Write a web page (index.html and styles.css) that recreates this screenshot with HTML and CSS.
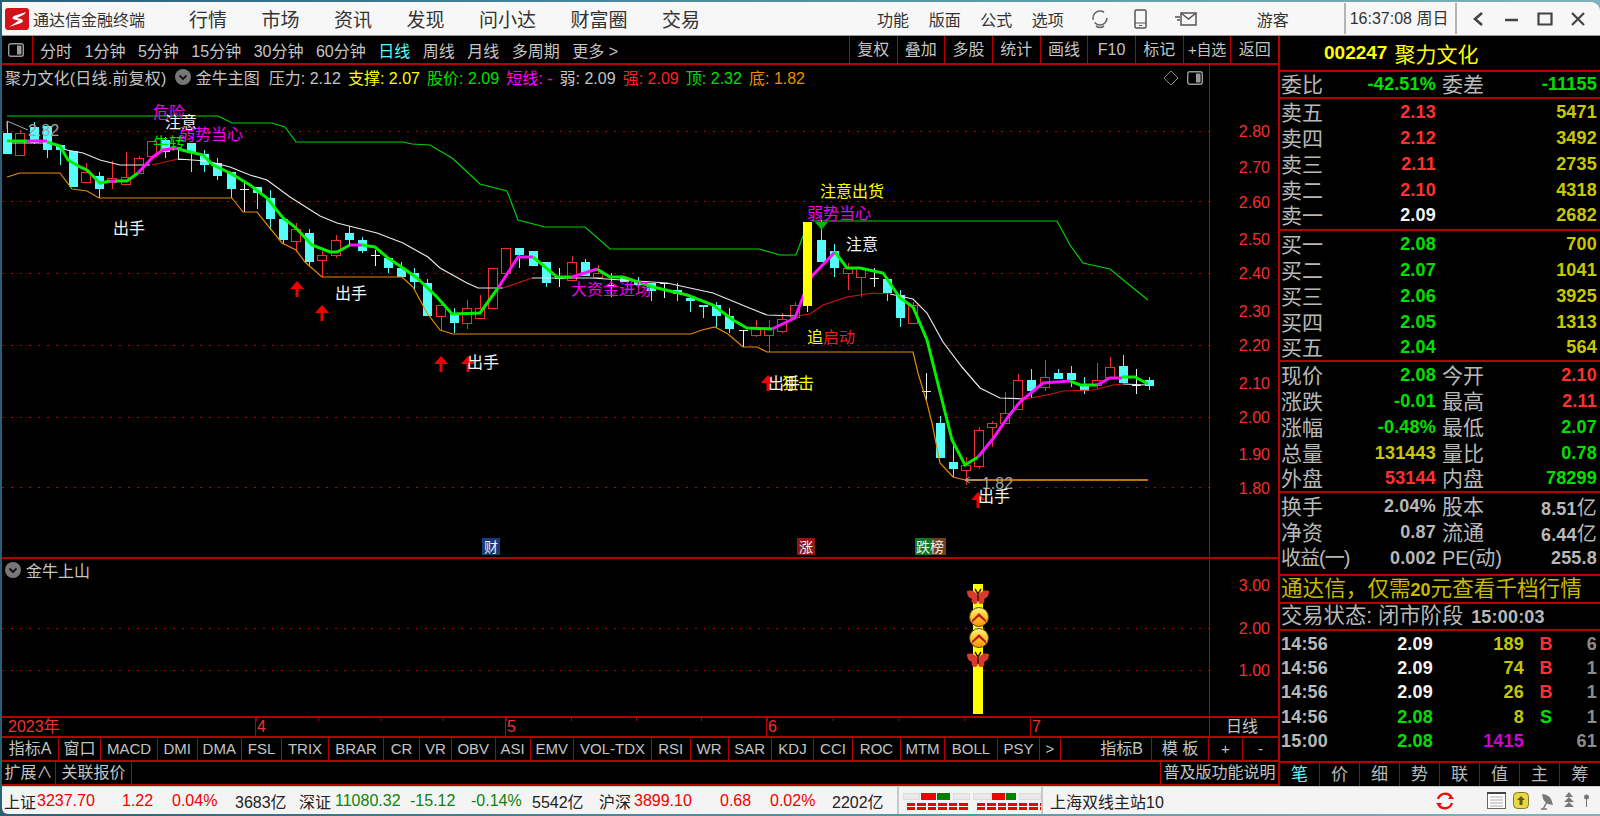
FILE: index.html
```html
<!DOCTYPE html>
<html lang="zh-CN">
<head>
<meta charset="utf-8">
<title>通达信金融终端</title>
<link rel="stylesheet" href="styles.css">
</head>
<body>
<div class="win">
  <header class="titlebar">
    <svg class="logo" viewBox="0 0 24 22"><rect width="24" height="22" rx="3" fill="#d0141c"/><path d="M21 4 9 8Q6 10 9 11.500L14 12.500 4 19 16 15Q20 13 16 11L12 10 19 6.500Z" fill="#fff"/></svg>
    <span class="app">通达信金融终端</span>
    <nav class="menu"><span>行情</span><span>市场</span><span>资讯</span><span>发现</span><span>问小达</span><span>财富圈</span><span>交易</span></nav>
    <nav class="menu2"><span>功能</span><span>版面</span><span>公式</span><span>选项</span></nav>
    <svg class="ti ti-head" viewBox="0 0 20 20"><circle cx="10" cy="9" r="7" fill="none" stroke="#666" stroke-width="1.600" stroke-dasharray="17 3 17 7"/><path d="M6 17q4 3 8 0" fill="none" stroke="#666" stroke-width="1.600"/></svg>
    <svg class="ti ti-phone" viewBox="0 0 13 20"><rect x="1" y="1" width="11" height="18" rx="1.500" fill="none" stroke="#555" stroke-width="1.500"/><path d="M1 14h11" stroke="#555"/><path d="M5 16.500h3" stroke="#555"/></svg>
    <svg class="ti ti-mail" viewBox="0 0 22 15"><path d="M6 2h15v12H6z" fill="none" stroke="#555" stroke-width="1.500"/><path d="M6 2l7.500 6L21 2" fill="none" stroke="#555" stroke-width="1.500"/><path d="M0 6h5M2 9h3" stroke="#555" stroke-width="1.500"/></svg>
    <span class="guest">游客</span>
    <span class="clock">16:37:08 周日</span>
    <div class="ctrls">
      <svg viewBox="0 0 16 16"><path d="M11 2 4 8l7 6" fill="none" stroke="#444" stroke-width="2.600"/></svg>
      <svg viewBox="0 0 16 16"><path d="M1 9h13" stroke="#444" stroke-width="2.500"/></svg>
      <svg viewBox="0 0 16 16"><path d="M1.500 2.500h13v11h-13z" fill="none" stroke="#444" stroke-width="2.200"/></svg>
      <svg viewBox="0 0 16 16"><path d="M2 2l12 12M14 2 2 14" stroke="#444" stroke-width="2.200"/></svg>
    </div>
  </header>

  <div class="body">
    <section class="left">
      <div class="toolbar">
        <div class="tb-icon"><svg class="sq-icon" viewBox="0 0 16 14"><rect x=".7" y=".7" width="14.600" height="12.600" rx="2" fill="none" stroke="#999" stroke-width="1.400"/><rect x="9" y="2.500" width="4.500" height="9" fill="#999"/></svg></div>
        <div class="periods"><span>分时</span><span>1分钟</span><span>5分钟</span><span>15分钟</span><span>30分钟</span><span>60分钟</span><span class="on">日线</span><span>周线</span><span>月线</span><span>多周期</span><span>更多 &gt;</span></div>
        <div class="tools"><span>复权</span><span>叠加</span><span>多股</span><span>统计</span><span>画线</span><span>F10</span><span>标记</span><span class="tight">+自选</span><span>返回</span></div>
      </div>

      <div class="pane pane-main">
        <div class="legend">
          <span class="gap-r">聚力文化(日线.前复权)</span>
          <svg class="circ" viewBox="0 0 16 16"><circle cx="8" cy="8" r="8" fill="#777"/><path d="M4.500 6.500 8 10l3.500-3.500" fill="none" stroke="#111" stroke-width="1.800"/></svg>
          <span class="gap-l">金牛主图</span>
          <span class="gap-m">压力: 2.12</span>
          <span class="c-y">支撑: 2.07</span>
          <span class="c-g">股价: 2.09</span>
          <span class="c-m">短线: -</span>
          <span>弱: 2.09</span>
          <span class="c-r">强: 2.09</span>
          <span class="c-g">顶: 2.32</span>
          <span class="c-o">底: 1.82</span>
        </div>
        <div class="legend-r">
          <svg class="dia" viewBox="0 0 16 16"><path d="M8 1l7 7-7 7-7-7z" fill="none" stroke="#888"/></svg>
          <svg class="sq-icon" viewBox="0 0 16 14"><rect x=".7" y=".7" width="14.600" height="12.600" rx="2" fill="none" stroke="#999" stroke-width="1.400"/><rect x="9" y="2.500" width="4.500" height="9" fill="#999"/></svg>
        </div>
        <svg class="canvas" width="1276" height="492" viewBox="2 65 1276 492">
          <path class="grid" d="M2 131.500H1209M2 201.500H1209M2 273.500H1209M2 345.500H1209M2 417.500H1209M2 487.500H1209"/>
          <path class="wick-c" d="M7 122V154M34 122V144M47 126V158M60 145V165M99 172V198M165 137V158M191 143V172M204 150V172M217 158V180M231 172V198M257 187V209M270 190V230M283 219V244M309 229V267M349 226V245M362 237V253M388 258V273M401 262V277M414 268V290M427 279V316M454 308V333M519 248V268M546 262V287M585 259V276M611 273V297M638 277V288M651 283V301M677 283V301M690 298V312M703 305V318M716 302V327M729 308V333M821 220V262M834 244V277M887 279V301M900 290V327M940 416V458M953 443V477M1031 369V398M1058 369V379M1071 366V387M1084 377V394M1123 355V383M1149 377V390"/>
          <path class="body-c" d="M7 133V154M34 127V143M47 126V150M60 145V150M73 151V187M99 176V189M165 140V152M191 143V153M204 154V165M217 163V176M231 172V189M257 187V193M270 198V219M283 219V240M309 233V262M349 233V240M362 240V251M388 258V268M401 268V277M414 273V282M427 283V316M454 313V323M519 248V255M533 251V266M546 262V283M585 262V276M611 285V287M624 278V282M638 282V285M651 283V291M677 290V294M690 298V301M703 305V307M716 305V316M729 316V329M821 240V262M834 251V268M887 279V293M900 295V318M940 423V458M953 462V469M1031 380V391M1058 373V379M1071 373V380M1084 384V391M1123 366V383M1149 380V386"/>
          <path class="candle-r" d="M15.500 133h9v22h-9zM20 130v3M81.500 172h9v10h-9zM86 163v9M86 182v1M107.500 178h9v4h-9zM112 161v17M112 182v7M121.500 177h9v7h-9zM126 152v25M134.500 158h9v15h-9zM139 156v2M147.500 141h9v15h-9zM291.500 229h9v12h-9zM296 223v6M296 241v11M317.500 255h9v5h-9zM322 251v4M322 260v17M331.500 240h9v15h-9zM336 235v5M336 255v3M436.500 305h9v11h-9zM441 302v3M441 316v14M462.500 308h9v15h-9zM467 300v8M467 323v6M475.500 308h9v10h-9zM480 295v13M488.500 268h9v40h-9zM501.500 248h9v25h-9zM567.500 262h9v18h-9zM572 256v6M593.500 273h9v4h-9zM598 265v8M751.500 328h9v7h-9zM756 320v8M756 335v2M764.500 328h9v7h-9zM769 320v8M769 335v17M777.500 319h9v12h-9zM782 313v6M782 331v2M790.500 305h9v12h-9zM795 302v3M843.500 268h9v5h-9zM848 263v5M848 273v17M856.500 268h9v9h-9zM861 277v20M908.500 305h9v18h-9zM913 302v3M961.500 465h9v5h-9zM966 457v8M966 470v15M974.500 430h9v36h-9zM979 427v3M979 466v3M987.500 423h9v4h-9zM992 421v2M992 427v20M1000.500 413h9v10h-9zM1005 392v21M1013.500 380h9v29h-9zM1018 374v6M1040.500 377h9v10h-9zM1045 360v17M1045 387v4M1092.500 380h9v5h-9zM1097 363v17M1097 385v3M1105.500 367h9v10h-9zM1110 357v10"/>
          <path class="doji" d="M178 148V159M178 159H186M239.500 189.500h9M244 183V212M370.500 255.500h9M375 250V266M554.500 278.500h9M559 268V287M659.500 283.500h9M664 283V298M738.500 330.500h9M743 330V347M869.500 278.500h9M874 268V287M921.500 391.500h9M926 373V400M1131.500 385.500h9M1136 369V394"/>

          <polyline class="ln ln-band" points="7,116 218,116 232,123 272,123 285,127 296,142 403,142 412,144 430,145 452,158 465,170 480,184 507,191 518,220 545,227 585,227 610,249 759,249 780,255 796,255 803,236"/>
          <polyline class="ln ln-band" points="812,221 1057,221 1070,245 1083,263 1110,269 1127,283 1148,300"/>
          <polyline class="ln ln-orange" points="7,177 20,173 60,173 72,189 87,191 99,198 232,198 243,212 257,212 282,243 296,250 305,262 322,277 402,277 413,287 427,313 440,330 453,334 691,334 702,330 715,327 728,334 743,347 757,347 767,352 913,352 918,373 927,403 932,423 940,463 953,477 965,480"/>
          <polyline class="ln ln-amber" points="965,480 1148,480"/>
          <polyline class="ln ln-white" points="7,143 50,143 67,150 83,153 100,160 120,165 150,165"/>
          <polyline class="ln ln-white" points="178,159 207,161 230,167 250,175 267,180 290,197 320,216 337,223 377,233 403,243 428,257 440,268 467,283 478,288 503,288"/>
          <polyline class="ln ln-white" points="532,278 592,278 667,283 713,293 747,307 767,315 797,316"/>
          <polyline class="ln ln-white" points="890,294 913,299 927,313 943,342 962,367 980,388 1000,398 1025,399"/>
          <polyline class="ln ln-white" points="1123,384 1147,385"/>
          <polyline class="ln ln-red" points="152,165 178,159"/>
          <polyline class="ln ln-red" points="503,288 532,278"/>
          <polyline class="ln ln-red" points="797,316 810,314 823,305 847,297 873,293 890,294"/>
          <polyline class="ln ln-red" points="1025,399 1047,395 1063,391 1093,390 1113,385 1123,384"/>

          <polyline class="ln-fast f-g" points="7,141 27,141"/>
          <polyline class="ln-fast f-m" points="27,141 47,141"/>
          <polyline class="ln-fast f-g" points="47,142 60,146 68,160 80,167 87,170 100,183 110,181"/>
          <polyline class="ln-fast f-m" points="110,181 115,181"/>
          <polyline class="ln-fast f-g" points="115,181 127,181 138,173"/>
          <polyline class="ln-fast f-m" points="138,173 153,157 163,150 177,148"/>
          <polyline class="ln-fast f-g" points="177,148 182,150 203,155 213,165 230,173 250,185 267,198 283,218 295,227 312,245 330,252 337,252 350,245"/>
          <polyline class="ln-fast f-m" points="350,245 362,245"/>
          <polyline class="ln-fast f-g" points="362,245 375,247 388,258 403,268 417,278 437,297 452,314 480,313 498,288"/>
          <polyline class="ln-fast f-m" points="498,288 518,257 533,257"/>
          <polyline class="ln-fast f-g" points="533,257 557,277 572,277"/>
          <polyline class="ln-fast f-m" points="572,277 597,269"/>
          <polyline class="ln-fast f-g" points="597,269 610,277 623,277 653,287 687,295 713,305 733,320 747,328 772,329"/>
          <polyline class="ln-fast f-m" points="772,329 795,318 803,297 812,276 835,252"/>
          <polyline class="ln-fast f-g" points="835,252 847,268 860,268 883,273 900,298 913,307 927,340 947,420 952,440 965,465 978,457"/>
          <polyline class="ln-fast f-m" points="978,457 992,440 1008,417 1020,402 1043,383 1070,381"/>
          <polyline class="ln-fast f-g" points="1070,381 1080,385 1097,385"/>
          <polyline class="ln-fast f-m" points="1097,385 1110,378 1122,378"/>
          <polyline class="ln-fast f-g" points="1122,377 1135,377 1148,384"/>

          <path class="wick-y" d="M807.500 306V312"/>
          <rect class="bar-y" x="803" y="222" width="9" height="84"/>
          <path class="tri" d="M815 222h13l-6.500 8z"/>

          <path class="arrow" d="M297 281l7 8h-5.500v8h-3v-8h-5.500zM322 305l7 8h-5.500v8h-3v-8h-5.500zM441 356l7 8h-5.500v8h-3v-8h-5.500zM468 356l7 8h-5.500v8h-3v-8h-5.500zM768 375l7 8h-5.500v8h-3v-8h-5.500zM978 492l7 8h-5.500v8h-3v-8h-5.500z"/>
          <path class="mark" d="M7 121v8M7 121l21 9M965 480h17M965 480l5-3M965 480l5 3"/>

          <text class="t t-gray" x="28" y="136">2.82</text>
          <text class="t t-gray" x="982" y="489">1.82</text>
          <text class="t t-m" x="153" y="118">危险</text>
          <text class="t t-w" x="165" y="128">注意</text>
          <text class="t t-g" x="153" y="149">牛转</text>
          <text class="t t-m" x="179" y="140">弱势当心</text>
          <text class="t t-w" x="113" y="234">出手</text>
          <text class="t t-w" x="335" y="299">出手</text>
          <text class="t t-w" x="467" y="368">出手</text>
          <text class="t t-m" x="571" y="295">大资金进场</text>
          <text class="t t-y" x="782" y="389">狙击</text>
          <text class="t t-w" x="768" y="389">出手</text>
          <text class="t t-y" x="807" y="343">追</text>
          <text class="t t-r" x="823" y="343">启动</text>
          <text class="t t-y" x="820" y="197">注意出货</text>
          <text class="t t-m" x="807" y="219">弱势当心</text>
          <text class="t t-w" x="846" y="250">注意</text>
          <text class="t t-w" x="978" y="502">出手</text>

          <rect class="bd bd-blue" x="482" y="538" width="18" height="17"/>
          <rect class="bd bd-red" x="797" y="538" width="18" height="17"/>
          <rect class="bd bd-green" x="915" y="538" width="16" height="17"/>
          <rect class="bd bd-brown" x="931" y="538" width="15" height="17"/>
          <text class="t-bd" x="484" y="552">财</text>
          <text class="t-bd" x="799" y="552">涨</text>
          <text class="t-bd" x="916" y="552">跌榜</text>

          <path class="axis" d="M1209.500 65V559"/>
          <text class="t-ax" x="1270" y="137">2.80</text>
          <text class="t-ax" x="1270" y="173">2.70</text>
          <text class="t-ax" x="1270" y="208">2.60</text>
          <text class="t-ax" x="1270" y="245">2.50</text>
          <text class="t-ax" x="1270" y="279">2.40</text>
          <text class="t-ax" x="1270" y="317">2.30</text>
          <text class="t-ax" x="1270" y="351">2.20</text>
          <text class="t-ax" x="1270" y="389">2.10</text>
          <text class="t-ax" x="1270" y="423">2.00</text>
          <text class="t-ax" x="1270" y="460">1.90</text>
          <text class="t-ax" x="1270" y="494">1.80</text>
        </svg>
      </div>

      <div class="pane pane-sub">
        <div class="legend">
          <svg class="circ" viewBox="0 0 16 16"><circle cx="8" cy="8" r="8" fill="#777"/><path d="M4.500 6.500 8 10l3.500-3.500" fill="none" stroke="#111" stroke-width="1.800"/></svg>
          <span class="gap-l">金牛上山</span>
        </div>
        <svg class="canvas" width="1276" height="157" viewBox="2 559 1276 157">
          <defs>
            <linearGradient id="ball" x1="0" y1="0" x2="0" y2="1"><stop offset="0" stop-color="#fff080"/><stop offset=".45" stop-color="#ffd030"/><stop offset="1" stop-color="#ff8a10"/></linearGradient>
            <symbol id="fly" viewBox="0 0 22 18"><path d="M11 8C8 2 3 2 0 3c0 5 2 7 5 8-1 2 0 5 3 5 2 0 3-2 3-5 0 3 1 5 3 5 3 0 4-3 3-5 3-1 5-3 5-8-3-1-8-1-11 5z" fill="#d83a30"/><path d="M11 6v7M11 6 8 1M11 6l3-5" stroke="#401010" stroke-width="1.500" fill="none"/></symbol>
            <symbol id="orb" viewBox="0 0 20 20"><circle cx="10" cy="10" r="9.500" fill="url(#ball)" stroke="#5a4a1a"/><path d="M3 13 10 6l7 7v2.500L10 9.500l-7 6z" fill="#c01818"/></symbol>
          </defs>
          <path class="grid" d="M2 628.500H1209M2 670.500H1209"/>
          <rect class="bar-y" x="973" y="584" width="10" height="130"/>
          <use href="#fly" x="967" y="588" width="22" height="18"/>
          <use href="#orb" x="969" y="607" width="20" height="20"/>
          <use href="#orb" x="969" y="628" width="20" height="20"/>
          <use href="#fly" x="967" y="651" width="22" height="18"/>
          <path class="axis" d="M1209.500 559V716"/>
          <text class="t-ax" x="1270" y="591">3.00</text>
          <text class="t-ax" x="1270" y="634">2.00</text>
          <text class="t-ax" x="1270" y="676">1.00</text>
        </svg>
      </div>

      <div class="timeaxis">
        <span class="first">2023年</span>
        <span class="seg">4</span>
        <span class="seg">5</span>
        <span class="seg">6</span>
        <span class="last">7</span>
        <span class="tf">日线</span>
      </div>

      <div class="tabs">
        <span class="cjk">指标A</span><span class="cjk">窗口</span><span>MACD</span><span>DMI</span><span>DMA</span><span>FSL</span><span>TRIX</span><span>BRAR</span><span>CR</span><span>VR</span><span>OBV</span><span>ASI</span><span>EMV</span><span>VOL-TDX</span><span>RSI</span><span>WR</span><span>SAR</span><span>KDJ</span><span>CCI</span><span>ROC</span><span>MTM</span><span>BOLL</span><span>PSY</span><span>&gt;</span><span class="cjk right">指标B</span><span class="cjk">模 板</span><span>+</span><span>-</span>
      </div>
      <div class="row2">
        <span>扩展∧</span><span>关联报价</span><span class="spacer"></span><span class="r2-end">普及版功能说明</span>
      </div>
    </section>

    <aside class="panel">
      <div class="p-head"><b>002247</b><span>聚力文化</span></div>
      <div class="qgrid q-ratio"><span>委比</span><b class="g">-42.51%</b><span>委差</span><b class="g">-11155</b></div>
      <div class="qgrid q-book q-asks">
        <span>卖五</span><b class="r">2.13</b><i></i><b class="v">5471</b>
        <span>卖四</span><b class="r">2.12</b><i></i><b class="v">3492</b>
        <span>卖三</span><b class="r">2.11</b><i></i><b class="v">2735</b>
        <span>卖二</span><b class="r">2.10</b><i></i><b class="v">4318</b>
        <span>卖一</span><b class="w">2.09</b><i></i><b class="v">2682</b>
      </div>
      <div class="qgrid q-book">
        <span>买一</span><b class="g">2.08</b><i></i><b class="v">700</b>
        <span>买二</span><b class="g">2.07</b><i></i><b class="v">1041</b>
        <span>买三</span><b class="g">2.06</b><i></i><b class="v">3925</b>
        <span>买四</span><b class="g">2.05</b><i></i><b class="v">1313</b>
        <span>买五</span><b class="g">2.04</b><i></i><b class="v">564</b>
      </div>
      <div class="qgrid q-book">
        <span>现价</span><b class="g">2.08</b><span>今开</span><b class="r">2.10</b>
        <span>涨跌</span><b class="g">-0.01</b><span>最高</span><b class="r">2.11</b>
        <span>涨幅</span><b class="g">-0.48%</b><span>最低</span><b class="g">2.07</b>
        <span>总量</span><b class="v">131443</b><span>量比</span><b class="g">0.78</b>
        <span>外盘</span><b class="r">53144</b><span>内盘</span><b class="g">78299</b>
      </div>
      <div class="qgrid q-book q-fin">
        <span>换手</span><b class="y">2.04%</b><span>股本</span><b class="y">8.51<em>亿</em></b>
        <span>净资</span><b class="y">0.87</b><span>流通</span><b class="y">6.44<em>亿</em></b>
        <span class="nw">收益(一)</span><b class="y">0.002</b><span class="pe">PE(动)</span><b class="y">255.8</b>
      </div>
      <div class="ad">通达信，仅需<b>20</b>元查看千档行情</div>
      <div class="state">交易状态: 闭市阶段 <b>15:00:03</b></div>
      <div class="ticks">
        <b class="y">14:56</b><b class="w">2.09</b><b class="v">189</b><b class="r c">B</b><b class="dim">6</b>
        <b class="y">14:56</b><b class="w">2.09</b><b class="v">74</b><b class="r c">B</b><b class="dim">1</b>
        <b class="y">14:56</b><b class="w">2.09</b><b class="v">26</b><b class="r c">B</b><b class="dim">1</b>
        <b class="y">14:56</b><b class="g">2.08</b><b class="v">8</b><b class="g c">S</b><b class="dim">1</b>
        <b class="y">15:00</b><b class="g">2.08</b><b class="pu">1415</b><b class="c"></b><b class="dim">61</b>
      </div>
      <div class="ptabs"><span class="on">笔</span><span>价</span><span>细</span><span>势</span><span>联</span><span>值</span><span>主</span><span>筹</span></div>
    </aside>
  </div>

  <footer class="status">
    <span>上证</span><span class="sr">3237.70</span><span class="sr">1.22</span><span class="sr">0.04%</span><span>3683亿</span>
    <span>深证</span><span class="sg">11080.32</span><span class="sg">-15.12</span><span class="sg">-0.14%</span><span>5542亿</span>
    <span>沪深</span><span class="sr">3899.10</span><span class="sr">0.68</span><span class="sr">0.02%</span><span>2202亿</span>
    <div class="sigs">
      <div class="sig"><div class="sig-top"><i class="b1"></i><i class="rd1"></i><i class="gr1"></i><i class="b2"></i></div><div class="dash"></div></div>
      <div class="sig sig2"><div class="sig-top"><i class="b3"></i><i class="rd2"></i><i class="gr2"></i><i class="b4"></i></div><div class="dash"></div></div>
    </div>
    <span class="server">上海双线主站10</span>
    <div class="tray">
      <svg class="tr-refresh" viewBox="0 0 20 20"><path d="M3 8a7.500 7.500 0 0 1 13-2.500M17 12a7.500 7.500 0 0 1-13 2.500" fill="none" stroke="#e81010" stroke-width="2.400"/><path d="M19 8h-6l3-4zM1 12h6l-3 4z" fill="#e81010"/></svg>
      <svg class="tr-doc" viewBox="0 0 19 17"><rect x=".5" y=".5" width="18" height="16" fill="#fff" stroke="#666"/><path d="M0 1h19" stroke="#444" stroke-width="2"/><path d="M3 5h13M3 8h13M3 11h13M3 14h13" stroke="#aaa"/></svg>
      <svg class="tr-coin" viewBox="0 0 16 17"><rect x=".5" y=".5" width="15" height="16" rx="4" fill="#e8d848" stroke="#807820"/><path d="M8 4l4 4H9.500v5h-3V8H4z" fill="#605818"/></svg>
      <svg class="tr-sat" viewBox="0 0 15 18"><path d="M3 2q9 0 11 11Q4 13 3 2z" fill="#777"/><path d="M8 10 4 17M2 17h6" stroke="#777" stroke-width="1.500"/></svg>
      <svg class="tr-tree" viewBox="0 0 10 17"><path d="M5 0l4 5H1zM5 5l5 5H0zM5 10l5 5H0z" fill="#777"/></svg>
      <svg class="tr-pin" viewBox="0 0 5 13"><circle cx="2.500" cy="3" r="2.500" fill="#777"/><path d="M2.500 5v8" stroke="#777"/></svg>
    </div>
  </footer>
</div>
</body>
</html>
```
FILE: styles.css
```css
* { box-sizing: border-box; }
html, body { margin: 0; height: 100%; }
body {
  width: 1600px; height: 816px; overflow: hidden;
  background: linear-gradient(90deg, #2a5f78 0, #4a8a9c 40%, #7fb4bc 100%);
  font-family: "Liberation Sans", "Noto Sans CJK SC", sans-serif;
  font-size: 16px; color: #c4c4c4;
}
span, b, em { white-space: nowrap; }
em { font-style: normal; font-weight: 400; font-size: 20px; }
i { font-style: normal; }
svg { display: block; }

.win { height: 816px; padding: 2px 0 2px 2px; display: flex; flex-direction: column; }

/* title bar */
.titlebar {
  height: 34px; flex: none; display: flex; align-items: center;
  background: #f7f7f7; color: #333; border-bottom: 1px solid #9a9a9a; border-top-right-radius: 9px;
  padding-left: 3px;
}
.logo { width: 24px; height: 22px; flex: none; }
.app { margin-left: 4px; width: 113px; font-size: 16px; }
.menu { display: flex; gap: 34.500px; margin-left: 43px; font-size: 19px; }
.menu2 { display: flex; gap: 19.500px; margin-left: 177px; font-size: 16px; }
.ti { flex: none; }
.ti-head { width: 20px; height: 20px; margin-left: 26px; }
.ti-phone { width: 13px; height: 20px; margin-left: 24px; }
.ti-mail { width: 22px; height: 15px; margin-left: 28px; }
.guest { margin-left: 60px; width: 87px; font-size: 16px; }
.clock { height: 31px; line-height: 31px; width: 113px; padding-left: 4px; border-left: 2px solid #b4b4b4; border-right: 2px solid #b4b4b4; font-size: 16px; white-space: nowrap; overflow: hidden; }
.ctrls { display: flex; flex: 1; align-items: center; padding-left: 14px; gap: 17px; }
.ctrls svg { width: 16px; height: 16px; flex: none; }

/* layout */
.body { flex: 1; min-height: 0; display: flex; background: #000; }
.left { width: 1276px; flex: none; display: flex; flex-direction: column; }

/* toolbar */
.toolbar { height: 29px; flex: none; display: flex; align-items: center; border-bottom: 2px solid #b80000; font-size: 16px; }
.tb-icon { width: 31px; height: 100%; border-right: 1px solid #b80000; display: flex; align-items: center; justify-content: center; padding-right: 2px; }
.sq-icon { width: 16px; height: 14px; }
.periods { display: flex; gap: 12.500px; margin-left: 7px; }
.periods .on { color: #54fcfc; }
.tools { display: flex; margin-left: auto; height: 100%; }
.tools span { width: 47.700px; border-left: 1px solid #b80000; text-align: center; line-height: 27px; font-size: 16px; }
.tools .tight { font-size: 15px; letter-spacing: -.3px; }

/* panes */
.pane { position: relative; flex: none; }
.pane-main { height: 494px; border-bottom: 2px solid #b80000; }
.pane-sub { height: 157px; }
.canvas { display: block; }
.legend { position: absolute; left: 3px; top: 1px; display: flex; align-items: center; gap: 7.100px; font-size: 16px; height: 21px; }
.pane-sub .legend { top: 0; }
.circ { width: 16px; height: 16px; flex: none; }
.gap-r { margin-right: 1px; letter-spacing: .2px; }
.gap-l { margin-left: -2px; }
.gap-m { margin-left: 2px; }
.c-y { color: #ffff00; } .c-g { color: #00e000; } .c-m { color: #ff00ff; } .c-r { color: #ff2020; } .c-o { color: #e89000; }
.legend-r { position: absolute; left: 1161px; top: 5px; display: flex; align-items: center; gap: 8px; }
.dia { width: 16px; height: 16px; }

.grid { stroke: #c00000; stroke-dasharray: 2 7; fill: none; shape-rendering: crispEdges; }
.wick-c { stroke: #54fcfc; fill: none; shape-rendering: crispEdges; }
.body-c { stroke: #54fcfc; stroke-width: 9; fill: none; shape-rendering: crispEdges; }
.candle-r { stroke: #f03030; fill: none; shape-rendering: crispEdges; }
.doji { stroke: #f0f0f0; fill: none; shape-rendering: crispEdges; }
.ln { fill: none; stroke-width: 1.200; }
.ln-band { stroke: #00d400; }
.ln-orange { stroke: #e88a00; }
.ln-amber { stroke: #f0a000; stroke-width: 1.400; }
.ln-white { stroke: #e8e8e8; }
.ln-red { stroke: #d81010; }
.ln-fast { fill: none; stroke-width: 3; }
.f-g { stroke: #00f000; }
.f-m { stroke: #ff10ff; }
.bar-y { fill: #ffff00; }
.wick-y { stroke: #ffff00; }
.tri { fill: #10b010; }
.arrow { fill: #f00000; }
.mark { stroke: #a8a8a8; fill: none; }

.t { font-size: 16px; font-family: "Liberation Sans", "Noto Sans CJK SC", sans-serif; }
.t-w { fill: #f4f4f4; } .t-m { fill: #f000f0; } .t-g { fill: #00e000; } .t-y { fill: #ffff00; } .t-r { fill: #e82020; } .t-gray { fill: #a0a0a0; }
.t-ax { font-size: 16px; fill: #f03030; text-anchor: end; }
.t-bd { font-size: 14px; fill: #f0f0f0; }
.bd-blue { fill: #163a7a; } .bd-red { fill: #8e1818; } .bd-green { fill: #0a7a20; } .bd-brown { fill: #70401a; }
.axis { stroke: #c00000; fill: none; shape-rendering: crispEdges; }

/* time axis */
.timeaxis { height: 22px; flex: none; display: grid; grid-template-columns: 253px 250px 261px 264px 179px 1fr; border-top: 2px solid #b80000; border-bottom: 2px solid #b80000; color: #f03030; line-height: 18px; }
.timeaxis span { padding-left: 1px; }
.timeaxis .first { padding-left: 6px; }
.timeaxis .seg { border-left: 1px solid #b80000; background: linear-gradient(90deg, #b80000 1px, transparent 1px) 0 0 / 25% 3px repeat-x; }
.timeaxis .last { border-left: 1px solid #b80000; }
.timeaxis .tf { border-left: 1px solid #b80000; color: #c4c4c4; text-align: center; padding: 0 4px 0 0; }

/* tabs */
.tabs { height: 24px; flex: none; display: grid; grid-template-columns: 57px 42px 57px 39.500px 44.500px 40px 47px 55px 36px 32px 43.500px 35px 43.500px 78px 38.600px 38px 43.400px 42px 39px 48px 44px 53px 42px 21px 91px 57px 34px 1fr; border-bottom: 2px solid #b80000; font-size: 15px; line-height: 22px; }
.tabs span { border-right: 1px solid #b80000; text-align: center; }
.tabs .cjk { font-size: 16px; }
.tabs .right { text-align: right; padding-right: 8px; }
.tabs span:last-child { border-right: 0; }

.row2 { height: 24px; flex: none; display: grid; grid-template-columns: 54px 76px 1fr 118px; border-bottom: 2px solid #b80000; line-height: 22px; }
.row2 span { border-right: 1px solid #b80000; text-align: center; }
.row2 .spacer { border-right: 0; }
.row2 .r2-end { border-left: 1px solid #b80000; border-right: 0; white-space: nowrap; }

/* right panel */
.panel { flex: 1; min-width: 0; border-left: 2px solid #b80000; display: flex; flex-direction: column; font-size: 21px; color: #b8b8b8; }
.panel b { font-weight: 700; font-size: 18px; letter-spacing: .2px; }
.panel .r { color: #ff3030; } .panel .g { color: #00e000; } .panel .w { color: #f4f4f4; }
.panel .v { color: #c8c800; } .panel .y { color: #b8b8b8; } .panel .dim { color: #8c8c8c; } .panel .pu { color: #d000d0; }
.p-head { height: 36px; flex: none; display: flex; align-items: center; gap: 7px; padding-left: 44px; color: #ffff00; border-bottom: 2px solid #b80000; }
.p-head b { font-size: 19px; letter-spacing: 0; color: #ffff00; }
.qgrid { display: grid; grid-template-columns: 60px 95px 61px 1fr; padding: 0 3px 0 1px; grid-auto-rows: 25.750px; align-items: center; flex: none; border-bottom: 2px solid #b80000; }
.qgrid span { line-height: 25px; }
.qgrid span:nth-child(4n+3) { padding-left: 6px; }
.qgrid b { text-align: right; }
.q-ratio { height: 27px; }
.q-book { padding-top: 1px; height: 131px; }
.q-asks { height: 132px; }
.q-fin { height: 83px; }
.nw { font-size: 20px; letter-spacing: -1px; }
.pe { font-size: 20px; }
.ad { height: 28px; flex: none; color: #c8b800; border-bottom: 2px solid #b80000; line-height: 25px; padding-left: 1px; white-space: nowrap; font-size: 21.600px; }
.ad b { color: #c8b800; letter-spacing: 0; }
.state { height: 27px; flex: none; border-bottom: 2px solid #b80000; line-height: 25px; padding-left: 1px; white-space: nowrap; font-size: 21.300px; }
.state b { color: #b8b8b8; margin-left: 2px; }
.ticks { flex: 1; display: grid; grid-template-columns: 100px 52px 91px 44px 1fr; grid-auto-rows: 24.300px; align-items: center; padding: 1px 3px 0 1px; text-align: right; }
.ticks b:nth-child(5n+1) { text-align: left; }
.ticks .c { text-align: center; }
.ptabs { height: 25px; flex: none; display: grid; grid-template-columns: repeat(8, 1fr); border-top: 2px solid #b80000; font-size: 17px; line-height: 23px; text-align: center; }
.ptabs span { border-right: 1px solid #b80000; }
.ptabs span:last-child { border-right: 0; }
.ptabs .on { color: #54fcfc; }

/* status bar */
.status { height: 28px; flex: none; display: flex; align-items: center; background: #f4f4f4; color: #222; font-size: 16px; border-top: 1px solid #ccc; border-bottom-left-radius: 6px; padding-left: 2px; }
.status > span:nth-of-type(1) { width: 33px; }
.status > span:nth-of-type(2) { width: 85px; }
.status > span:nth-of-type(3) { width: 50px; }
.status > span:nth-of-type(4) { width: 63px; }
.status > span:nth-of-type(5) { width: 64px; }
.status > span:nth-of-type(6) { width: 36px; }
.status > span:nth-of-type(7) { width: 75px; }
.status > span:nth-of-type(8) { width: 61px; }
.status > span:nth-of-type(9) { width: 61px; }
.status > span:nth-of-type(10) { width: 67px; }
.status > span:nth-of-type(11) { width: 35px; }
.status > span:nth-of-type(12) { width: 86px; }
.status > span:nth-of-type(13) { width: 50px; }
.status > span:nth-of-type(14) { width: 62px; }
.status > span:nth-of-type(15) { width: 65px; }
.sr { color: #f00000; } .sg { color: #108010; }
.sigs { width: 146px; height: 100%; display: flex; gap: 3px; padding: 6px 0 0 4px; border-left: 2px solid #c8c8c8; border-right: 2px solid #c8c8c8; flex: none; }
.sig { width: 67px; }
.sig2 { width: 68px; }
.sig-top { display: flex; height: 7px; }
.sig-top i { display: block; height: 100%; }
.b1 { width: 17px; background: #eaeaea; border: 1px solid #dcdcdc; }
.rd1 { width: 15px; background: #f00000; margin-left: 1px; }
.gr1 { width: 13px; background: #008000; margin-left: 1px; }
.b2 { width: 17px; margin-left: 3px; background: #eaeaea; border: 1px solid #dcdcdc; }
.b3 { width: 19px; background: #eaeaea; border: 1px solid #dcdcdc; }
.rd2 { width: 13px; background: #f00000; }
.gr2 { width: 10px; background: #008000; margin-left: 1px; }
.b4 { width: 22px; margin-left: 3px; background: #eaeaea; border: 1px solid #dcdcdc; }
.dash { margin: 3px 0 0 4px; height: 7px; background: repeating-linear-gradient(90deg, #f00000 0 8.500px, transparent 8.500px 10.500px); -webkit-mask: linear-gradient(#000 0 3px, transparent 3px 4px, #000 4px 7px); }
.status .server { margin-left: 7px; color: #222; width: 120px; }
.tray { margin-left: auto; display: flex; align-items: center; padding-right: 11px; }
.tr-refresh { width: 20px; height: 20px; margin-right: 32px; }
.tr-doc { width: 19px; height: 17px; margin-right: 7px; }
.tr-coin { width: 16px; height: 17px; margin-right: 10px; }
.tr-sat { width: 15px; height: 18px; margin-right: 10px; }
.tr-tree { width: 10px; height: 17px; margin-right: 10px; }
.tr-pin { width: 5px; height: 13px; }
```
